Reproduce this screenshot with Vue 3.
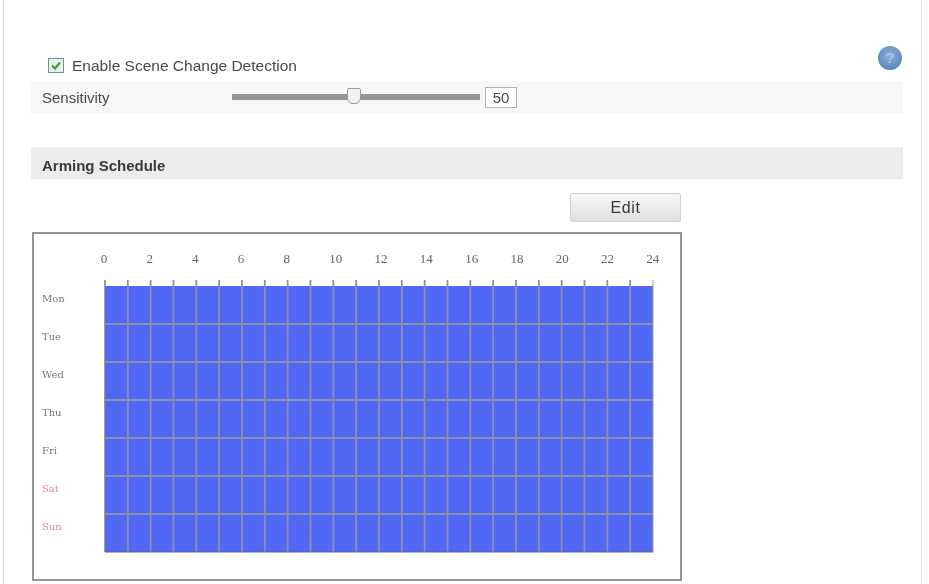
<script setup>
const days = [
  { name: 'Mon', weekend: false },
  { name: 'Tue', weekend: false },
  { name: 'Wed', weekend: false },
  { name: 'Thu', weekend: false },
  { name: 'Fri', weekend: false },
  { name: 'Sat', weekend: true },
  { name: 'Sun', weekend: true },
]
const left = 71
const top = 52
const cellW = 548 / 24
const rowH = 38
const hours = Array.from({ length: 13 }, (_, i) => {
  const h = i * 2
  const shift = h < 10 ? -1 : 2.5 - (h - 10) * 0.2
  return { h, x: left + h * cellW + shift }
})
const cols = Array.from({ length: 23 }, (_, i) => left + (i + 1) * cellW)
const rows = Array.from({ length: 6 }, (_, i) => top + (i + 1) * rowH)
</script>

<template>
  <div class="page">
    <div class="panel">
      <div class="enable">
        <span class="check">
          <svg width="12" height="11" viewBox="0 0 12 11"><path d="M2 5.5 L5 8.5 L10 2.5" fill="none" stroke="#3f9a3f" stroke-width="2.2" /></svg>
        </span>
        <span class="enable-label">Enable Scene Change Detection</span>
        <span class="help">?</span>
      </div>
      <div class="row-sens">
        <span class="sens-label">Sensitivity</span>
        <div class="slider">
          <span class="thumb"></span>
        </div>
        <span class="value">50</span>
      </div>
      <div class="heading">Arming Schedule</div>
      <div class="actions">
        <button class="edit" type="button">Edit</button>
      </div>
      <div class="schedule">
        <svg class="chart" width="646" height="345" viewBox="0 0 646 345">
          <text v-for="t in hours" :key="t.h" class="hour" :x="t.x" y="29" text-anchor="middle">{{ t.h }}</text>
          <rect :x="left" :y="top" width="548" height="266" fill="#5168f5" />
          <line v-for="(x, i) in cols" :key="'c' + i" :x1="x" :x2="x" :y1="top - 6" :y2="top + 266" stroke="#8d90a8" stroke-width="1.8" />
          <line :x1="left" :x2="left" :y1="top - 6" :y2="top + 266" stroke="#777b88" stroke-width="1.5" />
          <line :x1="left + 548" :x2="left + 548" :y1="top - 6" :y2="top + 266" stroke="#9a9db8" stroke-width="1" />
          <line v-for="(y, i) in rows" :key="'r' + i" :x1="left" :x2="left + 548" :y1="y" :y2="y" stroke="#8d90a8" stroke-width="1.8" />
          <line :x1="left" :x2="left + 548" :y1="top + 266" :y2="top + 266" stroke="#5a6490" stroke-width="1" />
          <text v-for="(d, i) in days" :key="d.name" class="day" :class="{ weekend: d.weekend }" x="8" :y="top + 16 + i * rowH">{{ d.name }}</text>
        </svg>
      </div>
    </div>
  </div>
</template>

<style>
html, body { margin: 0; background: #fff; }
</style>

<style scoped>
.page {
  width: 929px;
  height: 584px;
  box-sizing: border-box;
  overflow: hidden;
  padding: 0 7px 0 3px;
  font-family: "Liberation Sans", Arial, sans-serif;
  color: #4a4a4a;
  filter: blur(0.5px);
}
.panel {
  height: 100%;
  box-sizing: border-box;
  border-left: 1px solid #d8d8d8;
  border-right: 1px solid #ececec;
  padding: 54px 18px 0 27px;
}
.enable {
  display: flex;
  align-items: center;
  height: 27px;
  padding-left: 17px;
}
.check {
  width: 14px;
  height: 13px;
  margin-top: -5px;
  border: 1px solid #6f8fa5;
  background: #e6f1e4;
  display: flex;
  align-items: center;
  justify-content: center;
}
.enable-label {
  margin-left: 8px;
  margin-top: -4px;
  font-size: 15.5px;
  line-height: 20px;
}
.help {
  margin-left: auto;
  margin-top: -20px;
  margin-right: 1px;
  width: 24px;
  height: 24px;
  border-radius: 50%;
  background: radial-gradient(circle at 50% 40%, #8fb2dc, #5b86bb 75%);
  color: #a8c6e6;
  font-size: 15px;
  font-weight: bold;
  line-height: 24px;
  text-align: center;
}
.row-sens {
  display: flex;
  align-items: center;
  height: 32px;
  background: #f7f7f7;
  padding-left: 11px;
  font-size: 15px;
}
.sens-label {
  width: 190px;
}
.slider {
  position: relative;
  width: 248px;
  height: 6px;
  background: #969696;
}
.thumb {
  position: absolute;
  left: 115px;
  top: -6px;
  width: 12px;
  height: 14px;
  border: 1px solid #9a9a9a;
  border-radius: 2px 2px 6px 6px;
  background: #f2f2f2;
}
.value {
  margin-left: 5px;
  width: 30px;
  height: 19px;
  border: 1px solid #b4b4b4;
  background: #fff;
  text-align: center;
  font-size: 15px;
  line-height: 19px;
}
.heading {
  margin-top: 34px;
  height: 32px;
  line-height: 38px;
  background: #ececec;
  padding-left: 11px;
  font-size: 15px;
  font-weight: bold;
  color: #3a3a3a;
  overflow: hidden;
}
.actions {
  margin-top: 14px;
  width: 650px;
  display: flex;
  justify-content: flex-end;
}
.edit {
  width: 111px;
  height: 29px;
  border: 1px solid #d0d0d0;
  border-radius: 2px;
  background: linear-gradient(#f7f7f7, #e0e0e0);
  font-family: inherit;
  font-size: 16px;
  letter-spacing: 0.6px;
  color: #3c3c3c;
  padding: 0;
}
.schedule {
  margin: 10px 0 0 1px;
  width: 650px;
  height: 349px;
  box-sizing: border-box;
  border: 2px solid #949494;
  background: #fff;
}
.chart {
  display: block;
}
.hour {
  font-family: "Liberation Serif", serif;
  font-size: 13px;
  fill: #666;
}
.day {
  font-family: "DejaVu Serif", serif;
  font-size: 10px;
  fill: #777;
}
.weekend {
  fill: #e58a9a;
}
</style>
